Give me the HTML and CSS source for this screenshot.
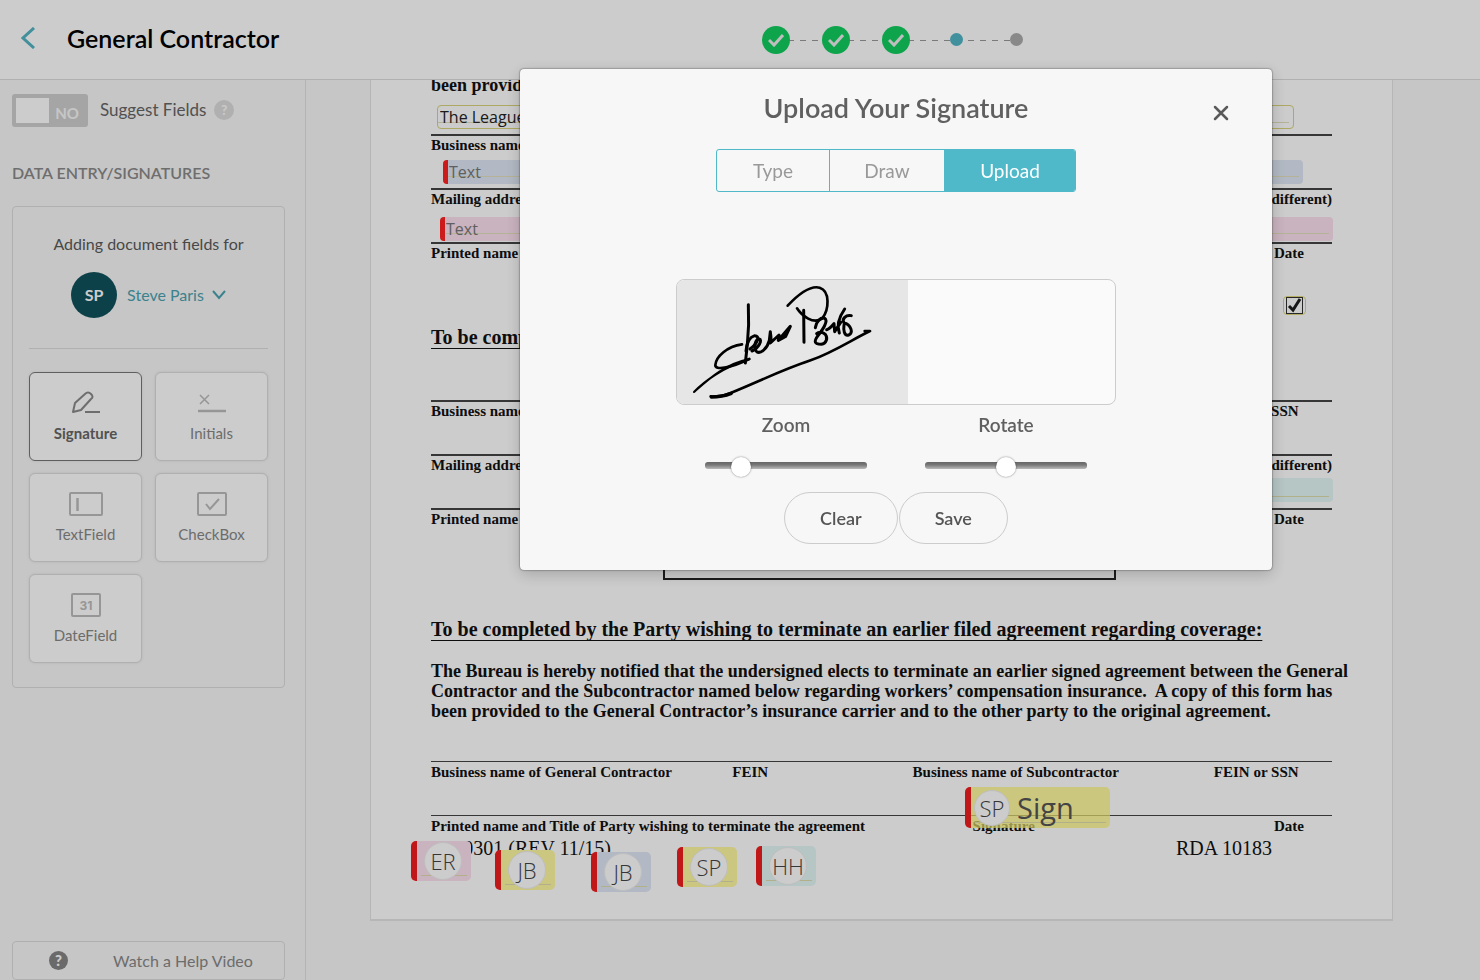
FILE: index.html
```html
<!DOCTYPE html>
<html lang="en">
<head>
<meta charset="utf-8">
<title>General Contractor</title>
<link rel="stylesheet" href="styles.css">
</head>
<body>
<div class="app">
  <header class="topbar">
    <div class="topbar-title">
      <a class="back" href="#" aria-label="Back">
        <svg width="14" height="22" viewBox="0 0 14 22" fill="none" stroke="currentColor" stroke-width="3"><path d="M13 1 2 11l11 10"/></svg>
      </a>
      <h1>General Contractor</h1>
    </div>
    <ol class="steps">
      <li><span class="step-done"><svg width="16" height="14" viewBox="0 0 16 14" fill="none" stroke="#eee" stroke-width="3"><path d="M1 7l5 5 9-10"/></svg></span></li>
      <li><span class="step-done"><svg width="16" height="14" viewBox="0 0 16 14" fill="none" stroke="#eee" stroke-width="3"><path d="M1 7l5 5 9-10"/></svg></span></li>
      <li><span class="step-done"><svg width="16" height="14" viewBox="0 0 16 14" fill="none" stroke="#eee" stroke-width="3"><path d="M1 7l5 5 9-10"/></svg></span></li>
      <li><span class="step-dot current"></span></li>
      <li><span class="step-dot"></span></li>
    </ol>
  </header>

  <div class="workspace">
    <aside class="sidebar">
      <div class="suggest">
        <span class="toggle">
          <input type="checkbox" id="suggest">
          <span class="toggle-text">NO</span>
        </span>
        <label for="suggest">Suggest Fields</label>
        <button class="hint" type="button">?</button>
      </div>
      <h2 class="side-heading">DATA ENTRY/SIGNATURES</h2>
      <section class="panel">
        <p class="panel-intro">Adding document fields for</p>
        <button class="signer" type="button">
          <span class="avatar">SP</span>
          <span>Steve Paris</span>
          <svg width="14" height="10" viewBox="0 0 14 10" fill="none" stroke="currentColor" stroke-width="2"><path d="M1 1l6 7 6-7"/></svg>
        </button>
        <div class="tools">
          <button class="tool selected" type="button">
            <svg width="28" height="24" viewBox="0 0 28 24" fill="none" stroke="currentColor" stroke-width="2" stroke-linejoin="round"><path d="M1 21 3 12 13 3Q16 0 19 3T19 8L9 19ZM13 21h15"/></svg>
            <span>Signature</span>
          </button>
          <button class="tool" type="button">
            <svg width="28" height="24" viewBox="0 0 28 24" fill="none" stroke="currentColor"><path stroke-width="1.500" d="M2 4l9 9M11 4l-9 9"/><path stroke-width="2.500" d="M0 20h28"/></svg>
            <span>Initials</span>
          </button>
          <button class="tool" type="button">
            <svg width="36" height="26" viewBox="0 0 36 26" fill="none" stroke="currentColor" stroke-width="2"><rect x="2" y="2" width="32" height="22" rx="1"/><path d="M9.500 7v13" stroke-width="2.500"/></svg>
            <span>TextField</span>
          </button>
          <button class="tool" type="button">
            <svg width="30" height="26" viewBox="0 0 30 26" fill="none" stroke="currentColor" stroke-width="2"><rect x="1" y="2" width="28" height="22" rx="1"/><path d="M9 13l4 5 9-10"/></svg>
            <span>CheckBox</span>
          </button>
          <button class="tool" type="button">
            <svg width="30" height="26" viewBox="0 0 30 26" fill="none" stroke="currentColor" stroke-width="2"><rect x="1" y="2" width="28" height="22" rx="1"/><text x="15" y="18" class="day">31</text></svg>
            <span>DateField</span>
          </button>
        </div>
      </section>
      <button class="help" type="button"><span class="help-icon">?</span><span class="help-text">Watch a Help Video</span></button>
    </aside>

    <main class="canvas">
      <article class="sheet">
        <p class="clause">been provided</p>
        <div class="line-row first four"><span>Business name of General Contractor</span></div>
        <div class="line-row split"><span>Mailing address</span><span>(if different)</span></div>
        <div class="line-row three"><span>Printed name and Title</span><span></span><span>Date</span></div>
        <h2 class="clause-heading">To be completed by</h2>
        <div class="line-row second four"><span>Business name</span><span></span><span></span><span>FEIN or SSN</span></div>
        <div class="line-row split"><span>Mailing address</span><span>(if different)</span></div>
        <div class="line-row short three"><span>Printed name and Title</span><span></span><span>Date</span></div>
        <div class="stamp-box"></div>
        <h2 class="clause-heading last">To be completed by the Party wishing to terminate an earlier filed agreement regarding coverage:</h2>
        <p class="clause">The Bureau is hereby notified that the undersigned elects to terminate an earlier signed agreement between the General<br>Contractor and the Subcontractor named below regarding workers’ compensation insurance.&nbsp; A copy of this form has<br>been provided to the General Contractor’s insurance carrier and to the other party to the original agreement.</p>
        <div class="line-row third four"><span>Business name of General Contractor</span><span>FEIN</span><span>Business name of Subcontractor</span><span>FEIN or SSN</span></div>
        <div class="line-row fourth three"><span>Printed name and Title of Party wishing to terminate the agreement</span><span>Signature</span><span>Date</span></div>
        <footer class="form-code"><span>LB-0301 (REV 11/15)</span><span>RDA 10183</span></footer>

        <input class="field f-name" type="text" value="The League" aria-label="Business name">
        <input class="field blue f-address" type="text" placeholder="Text" aria-label="Mailing address">
        <input class="field pink f-printed" type="text" placeholder="Text" aria-label="Printed name">
        <div class="field teal f-date"></div>
        <div class="f-check">
          <input type="checkbox" checked aria-label="Confirmation">
          <svg width="17" height="17" viewBox="0 0 17 17" fill="none" stroke="#1c1c1c" stroke-width="3"><path d="M3 9l4 4 7-11"/></svg>
        </div>

        <div class="chip pink c-er"><span class="badge">ER</span></div>
        <div class="chip yellow c-jb1"><span class="badge">JB</span></div>
        <div class="chip blue c-jb2"><span class="badge">JB</span></div>
        <div class="chip yellow c-sp"><span class="badge">SP</span></div>
        <div class="chip teal c-hh"><span class="badge">HH</span></div>
        <div class="chip yellow c-sign"><span class="badge">SP</span><span class="sign">Sign</span></div>
      </article>
    </main>
  </div>
</div>

<div class="overlay">
  <section class="modal" role="dialog" aria-labelledby="modal-title">
    <button class="close" type="button" aria-label="Close">
      <svg width="16" height="16" viewBox="0 0 16 16" fill="none" stroke="currentColor" stroke-width="2.500" stroke-linecap="round"><path d="M2 2l12 12M14 2L2 14"/></svg>
    </button>
    <h2 id="modal-title">Upload Your Signature</h2>
    <div class="tabs" role="tablist">
      <button type="button" role="tab" class="tab">Type</button>
      <button type="button" role="tab" class="tab">Draw</button>
      <button type="button" role="tab" class="tab active" aria-selected="true">Upload</button>
    </div>
    <div class="preview">
      <svg class="scan" viewBox="51 27 693 375" fill="none" stroke="#000" stroke-linecap="round" stroke-linejoin="round" role="img" aria-label="Signature of Steve Paris">
        <path stroke-width="9" d="M265 101q3 60-3 120l-6 55"/>
        <path stroke-width="8" d="M246 220c-44 6-78 36-80 62-1 16 42 11 102-18"/>
        <path stroke-width="6" d="M268 264c-72 14-124 62-166 99 28-30 90-76 166-99"/>
        <path stroke-width="9" d="M258 240c2-24 12-42 26-46 16 0 12 20-14 40"/>
        <path stroke-width="9" d="M276 240c20-8 32-34 22-36-14 0-18 30-8 38 12 8 32-10 38-34l3-26M331 184q4 24 0 32l26-24-2 16 36-42-14 30-22 12"/>
        <path stroke-width="8" d="M383 104c30-32 66-62 96-54 32 10 28 66 8 92-26 20-62-8-76-30"/>
        <path stroke-width="9" d="M431 118l1 96M466 170c4-20 16-32 28-28 12 8-6 34-20 52-14 18-10 26 10 26 16-2 20-20 12-30-8-8-20-8-26-2M500 176c10-2 18-14 22-18l2 24 18-28M554 114q-28 40-16 72M574 134c-16-4-30 10-22 22 20 4 30 30 14 36-14 4-16-16-14-30"/>
        <path stroke-width="8" d="M152 376q30 4 60-10c80-32 150-68 240-98 68-24 124-62 178-88l-16 0"/>
        <path stroke-width="10" d="M154 378q32 0 60-11"/>
      </svg>
    </div>
    <div class="sliders">
      <label class="slider">Zoom<input type="range" min="0" max="100" value="18"></label>
      <label class="slider">Rotate<input type="range" min="0" max="100" value="50"></label>
    </div>
    <div class="actions">
      <button type="button">Clear</button>
      <button type="button">Save</button>
    </div>
  </section>
</div>
</body>
</html>
```
FILE: styles.css
```css
* { box-sizing: border-box; }
body {
  margin: 0;
  font-family: Lato, "Open Sans", sans-serif;
  font-size: 16px;
  color: #666;
  background: #f8f8f8;
}
h1, h2, p, ol { margin: 0; padding: 0; }
button, input { font: inherit; color: inherit; margin: 0; }
button { background: none; border: 0; padding: 0; cursor: pointer; }
svg { display: block; }

.app { isolation: isolate; height: 100vh; display: flex; flex-direction: column; overflow: hidden; }

/* Top bar */
.topbar {
  flex: none;
  display: flex;
  height: 80px;
  background: #fff;
  border-bottom: 1px solid #dcdcdc;
}
.topbar-title {
  flex: none;
  width: 312px;
  display: flex;
  align-items: center;
  gap: 32px;
  padding: 0 0 4px 21px;
}
.back { color: #52b4c3; }
h1 { font-size: 25px; line-height: 32px; font-weight: 600; color: #000; white-space: nowrap; }
.steps { flex: 1; display: flex; justify-content: center; align-items: center; list-style: none; }
.steps li { position: relative; width: 60px; height: 28px; display: flex; align-items: center; justify-content: center; }
.steps li + li::before {
  content: "";
  position: absolute;
  left: -30px;
  top: 14px;
  width: 60px;
  height: 1px;
  background: repeating-linear-gradient(90deg, #999 0 6px, transparent 6px 12px);
}
.step-done { z-index: 1; width: 28px; height: 28px; border-radius: 50%; background: #12ce5f; display: flex; align-items: center; justify-content: center; }
.step-dot { z-index: 1; width: 13px; height: 13px; border-radius: 50%; background: #acacac; }
.step-dot.current { background: #50b5c6; }

/* Sidebar */
.workspace { flex: 1; min-height: 0; display: flex; }
.sidebar {
  flex: none;
  width: 306px;
  padding: 14px 20px 0 12px;
  border-right: 1px solid #e2e2e2;
  display: flex;
  flex-direction: column;
}
.suggest { display: flex; align-items: center; gap: 8px; height: 33px; padding-bottom: 2px; }
.suggest label { padding-left: 4px; font-size: 17px; color: #666; }
.toggle { display: grid; align-self: flex-start; }
.toggle input {
  grid-area: 1 / 1;
  appearance: none;
  width: 76px;
  height: 33px;
  border-radius: 3px;
  background: linear-gradient(#fff, #fff) 4px 4px / 33px 25px no-repeat #cfcfcf;
}
.toggle-text { grid-area: 1 / 1; justify-self: end; align-self: center; padding: 5px 9px 0 0; font-size: 15px; line-height: 16px; font-weight: 700; color: #f8f8f8; pointer-events: none; }
.hint { width: 20px; height: 20px; border-radius: 50%; background: #dcdcdc; color: #fafafa; font-size: 14px; font-weight: 900; line-height: 20px; }
.side-heading { margin-top: 36px; font-size: 16px; line-height: 20px; font-weight: 600; color: #8a8a8a; white-space: nowrap; }
.panel { margin-top: 23px; height: 482px; padding: 27px 16px 0; border: 1px solid #dcdcdc; border-radius: 4px; }
.panel-intro { text-align: center; line-height: 20px; color: #5a5a5a; white-space: nowrap; }
.signer {
  width: 100%;
  height: 77px;
  display: flex;
  align-items: flex-start;
  justify-content: center;
  gap: 8px;
  margin-top: 18px;
  line-height: 46px;
  color: #4ba3b1;
  border-bottom: 1px solid #dcdcdc;
}
.signer svg { margin-top: 18px; }
.avatar { width: 46px; margin-right: 2px; border-radius: 50%; background: #11525c; color: #fff; font-weight: 700; }
.tools { display: grid; grid-template-columns: 1fr 1fr; gap: 12px 13px; margin-top: 23px; }
.tool {
  height: 89px;
  display: flex;
  flex-direction: column;
  align-items: center;
  gap: 8px;
  padding-top: 17px;
  border: 1px solid #dcdcdc;
  border-radius: 6px;
  background: #fff;
  box-shadow: 0 0 3px #e0e0e0;
  font-size: 15px;
  line-height: 18px;
  color: #888;
}
.tool svg { height: 26px; color: #bcbcbc; }
.tool.selected { border-color: #777; font-weight: 700; color: #666; }
.tool.selected svg { color: #8a8a8a; }
.day { font: 700 12px Inter, sans-serif; text-anchor: middle; fill: currentColor; stroke: none; }
.help { flex: none; display: flex; align-items: center; height: 39px; margin-top: auto; border: 1px solid #dcdcdc; border-radius: 4px; color: #888; }
.help-icon { width: 19px; margin-left: 36px; border-radius: 50%; background: #858585; color: #fff; font-size: 15px; font-weight: 900; line-height: 19px; }
.help-text { flex: 1; padding-left: 14px; }

/* Document */
.canvas { flex: 1; min-width: 0; overflow: hidden; padding: 0 87px 0 64px; }
.sheet {
  position: relative;
  margin-top: -6px;
  padding: 1px 60px 61px;
  background: #fff;
  border: 1px solid #e4e4e4;
  border-width: 0 1px 2px;
  font-family: "Liberation Serif", serif;
  color: #111;
}
.clause { font-size: 18px; line-height: 20px; font-weight: 700; white-space: nowrap; }
.clause-heading { font-size: 20px; line-height: 28px; text-decoration: underline; text-decoration-thickness: 1px; text-underline-offset: 4px; margin-top: 27px; white-space: nowrap; }
.clause-heading.last { margin: 35px 0 18px; }
.line-row { display: grid; height: 54px; border-top: 2px solid #444; font-size: 15px; line-height: 18px; font-weight: 700; white-space: nowrap; }
.line-row.short { height: 32px; }
.first { margin-top: 39px; }
.second { margin-top: 49px; }
.third { margin-top: 40px; }
.four { grid-template-columns: 301fr 180fr 301fr 118fr; }
.three { grid-template-columns: 541fr 301fr 58fr; }
.split { grid-template-columns: 1fr auto; }
.third, .fourth { border-top-width: 1px; line-height: 20px; }
.line-row.fourth { height: 23px; }
.stamp-box { width: 453px; height: 40px; margin: 0 0 0 auto; border: 2px solid #222; }
.stamp-box { margin-right: 216px; }
.form-code { display: flex; justify-content: space-between; padding-right: 60px; font-size: 20px; line-height: 20px; }

/* Fields dropped on the document */
.field { position: absolute; height: 24px; padding: 0 4px; border: 0; border-radius: 4px; font: 16px/24px "Open Sans", sans-serif; color: #222; }
.field::placeholder { color: #777; opacity: 1; }
.pink { background: #fbe0ee; border-left: 5px solid #f22; }
.blue { background: #dfe8f5; border-left: 5px solid #f22; }
.teal { background: #e4f8f6; }
.yellow { background: #fff9a0; border-left: 6px solid #f22; }
.f-name { left: 66px; top: 31px; width: 857px; padding: 0 2px; border: 1px solid #d9d27c; background: #fff; line-height: 20px; }
.f-address { left: 72px; top: 86px; width: 860px; padding: 0 1px; }
.f-printed { left: 69px; top: 143px; width: 893px; padding: 0 1px; }
.f-name, .f-address, .f-printed {
  background-image: linear-gradient(#e3e0bd, #e3e0bd);
  background-position: 0 16px;
  background-size: calc(100% - 4px) 1px;
  background-repeat: no-repeat;
}
.f-date { right: 59px; top: 404px; width: 260px; }
.f-date::after, .chip::after { content: ""; position: absolute; left: 4px; right: 4px; bottom: 5px; height: 1px; background: #dfdcae; }
.f-check { position: absolute; right: 86px; top: 222px; width: 23px; height: 19px; display: grid; place-items: center; border: 1px solid #e0d97c; border-radius: 4px; }
.f-check input {
  grid-area: 1 / 1;
  appearance: none;
  width: 17px;
  height: 17px;
  border: 1px solid #333;
  background: #fff;
}
.f-check svg { grid-area: 1 / 1; pointer-events: none; }

.chip { position: absolute; width: 60px; height: 40px; padding-left: 7px; border-left: 6px solid #f01e1e; border-radius: 5px; display: flex; align-items: center; font-family: "Open Sans", sans-serif; color: #444; }
.badge { z-index: 1; flex: none; width: 38px; border-radius: 50%; background: #fff; border: 1px solid #eee; font-size: 22px; line-height: 36px; font-weight: 300; text-align: center; }
.c-er { left: 40px; top: 767px; }
.c-jb1 { left: 124px; top: 776px; }
.c-jb2 { left: 220px; top: 778px; }
.c-sp { left: 306px; top: 773px; }
.c-hh { left: 385px; top: 772px; }
.c-sign { left: 594px; top: 713px; width: 145px; height: 41px; padding-left: 3px; gap: 7px; background: rgba(255, 247, 120, .72); }
.c-sign .badge { width: 36px; line-height: 34px; }
.sign { font-size: 29px; line-height: 40px; color: #555; z-index: 1; }

/* Upload dialog */
.overlay {
  position: fixed;
  inset: 0;
  display: flex;
  justify-content: center;
  align-items: flex-start;
  padding: 69px 0 0 312px;
  background: rgba(0, 0, 0, .2);
}
.modal {
  position: relative;
  width: 752px;
  padding: 23px 0 26px;
  display: flex;
  flex-direction: column;
  align-items: center;
  background: #f7f7f7;
  border-radius: 4px;
  box-shadow: 0 0 2px rgba(0, 0, 0, .7), 0 4px 16px rgba(0, 0, 0, .2);
  color: #606060;
}
.close { position: absolute; right: 43px; top: 36px; color: #5a5a5a; }
.modal h2 { font-size: 27px; line-height: 32px; font-weight: 600; }
.tabs { display: flex; margin-top: 25px; border: 1px solid #4fb8c9; border-radius: 3px; overflow: hidden; }
.tab { width: 112px; height: 41px; font-size: 19px; color: #999; }
.tab + .tab { width: 115px; border-left: 1px solid #4fb8c9; }
.tab.active.active { width: 131px; background: #4fb8c9; color: #fff; }
.preview { width: 440px; height: 126px; margin-top: 87px; border: 1px solid #ccc; border-radius: 8px; overflow: hidden; background: #fafafa; }
.scan { width: 231px; height: 125px; background: #e6e6e6; }
.sliders { width: 440px; display: grid; grid-template-columns: 1fr 1fr; margin-top: 8px; }
.slider { display: flex; flex-direction: column; align-items: center; gap: 17px; font-size: 19px; line-height: 24px; font-weight: 600; }
.slider input { appearance: none; width: 162px; height: 22px; background: none; }
.slider input::-webkit-slider-runnable-track { height: 7px; border-radius: 3px; background: linear-gradient(#666, #777 40%, #bbb); }
.slider input::-webkit-slider-thumb { appearance: none; width: 20px; height: 20px; margin-top: -5px; border-radius: 50%; background: #fff; box-shadow: 0 0 2px rgba(0, 0, 0, .5); }
.actions { display: flex; gap: 1px; margin-top: 16px; }
.actions button { height: 52px; padding: 0 35px; border: 1px solid #ccc; border-radius: 26px; font-size: 18px; font-weight: 600; color: #555; }
```
